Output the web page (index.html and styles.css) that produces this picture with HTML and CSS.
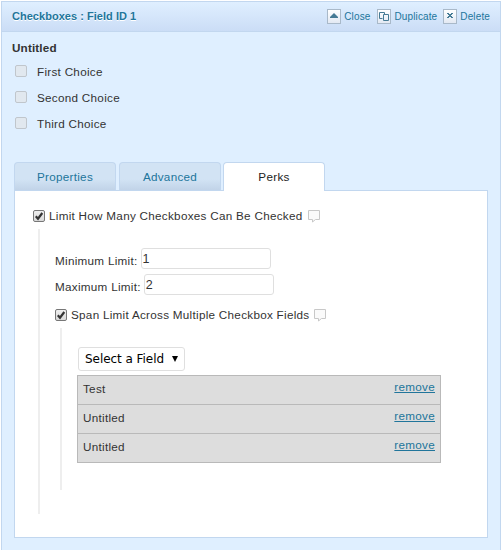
FILE: index.html
```
<!DOCTYPE html>
<html lang="en">
<head>
<meta charset="utf-8">
<title>Checkboxes field</title>
<link rel="stylesheet" href="styles.css">
</head>
<body>
<section class="field">
  <header class="head">
    <strong class="title">Checkboxes : Field ID 1</strong>
    <a class="action close"><svg class="icon" viewBox="0 0 12 13"><path d="M2 8V7L6 3L10 7V8Z"/></svg><span>Close</span></a>
    <a class="action duplicate"><svg class="icon" viewBox="0 0 12 13"><path class="line" d="M4.500 8.500H1.500V2.500H6.500V4.500M5.500 4.500H10.500V10.500H5.500Z"/></svg><span>Duplicate</span></a>
    <a class="action delete"><svg class="icon" viewBox="0 0 12 13"><path d="M3 3H5V4H7V3H9V4H8V5H7V6H8V7H9V8H7V7H5V8H3V7H4V6H5V5H4V4H3Z"/></svg><span>Delete</span></a>
  </header>
  <div class="preview">
    <strong class="label">Untitled</strong>
    <div class="choice"><i class="box off"></i><span>First Choice</span></div>
    <div class="choice"><i class="box off"></i><span>Second Choice</span></div>
    <div class="choice"><i class="box off"></i><span>Third Choice</span></div>
  </div>
  <nav class="tabs">
    <a class="tab">Properties</a>
    <a class="tab advanced">Advanced</a>
    <a class="tab active">Perks</a>
  </nav>
  <div class="panel">
    <div class="option">
      <span class="box on"><svg viewBox="0 0 12 12"><path d="M2.800 6.200L5 8.700L9.300 3"/></svg></span><span class="text">Limit How Many Checkboxes Can Be Checked</span><svg class="tip" viewBox="0 0 12 13"><path d="M.5 .5H11.500V9.500H7.500L4.500 12V9.500H.5Z"/></svg>
    </div>
    <div class="group outer">
      <div class="row"><label>Minimum Limit:</label><div class="input">1</div></div>
      <div class="row"><label>Maximum Limit:</label><div class="input">2</div></div>
      <div class="option span">
        <span class="box on"><svg viewBox="0 0 12 12"><path d="M2.800 6.200L5 8.700L9.300 3"/></svg></span><span class="text">Span Limit Across Multiple Checkbox Fields</span><svg class="tip" viewBox="0 0 12 13"><path d="M.5 .5H11.500V9.500H7.500L4.500 12V9.500H.5Z"/></svg>
      </div>
      <div class="group inner">
        <div class="select"><span>Select a Field</span><svg viewBox="0 0 6 6"><path d="M0 0H6L3 6Z"/></svg></div>
        <ul class="list">
          <li><span>Test</span><a>remove</a></li>
          <li><span>Untitled</span><a>remove</a></li>
          <li><span>Untitled</span><a>remove</a></li>
        </ul>
      </div>
    </div>
  </div>
</section>
</body>
</html>
```
FILE: styles.css
```
* { box-sizing: border-box; }
body {
  margin: 0;
  height: 550px;
  overflow: hidden;
  background: #fff;
  color: #333;
  font: 11.700px/16px "Liberation Sans", Arial, sans-serif;
  letter-spacing: .28px;
}
a { color: #21759b; }
.field {
  width: 500px;
  height: 560px;
  margin: 1px 0 0 1px;
  border: 1px solid #c2d7ef;
  background: #dfefff;
}
.head {
  display: flex;
  align-items: center;
  height: 30px;
  padding: 0 10px;
  border-bottom: 1px solid #c2d7ef;
  background: linear-gradient(#dfefff, #cbddf6);
}
.title {
  flex: 1;
  padding-bottom: 1px;
  color: #21759b;
  font-size: 11px;
  letter-spacing: .03px;
  text-shadow: 0 1px 0 #fff;
}
.action {
  display: flex;
  align-items: center;
  font-size: 10px;
  letter-spacing: .13px;
}
.action span { margin-left: 3px; }
.icon {
  width: 14px;
  height: 15px;
  margin-top: -1px;
  border: 1px solid #a9b9c9;
  background: linear-gradient(#fff, #e3e9f3);
  fill: #467b95;
}
.line { fill: none; stroke: #467b95; }
.duplicate { margin-left: 7px; }
.delete { margin-left: 6px; }
.preview { height: 130px; padding: 8px 10px 0; }
.label { display: block; height: 19px; letter-spacing: .15px; }
.choice {
  display: flex;
  align-items: center;
  height: 26px;
}
.choice span { margin-left: 10px; }
.box {
  display: block;
  flex: none;
  width: 12px;
  height: 12px;
  border: 1px solid #777;
  border-radius: 2px;
  background: linear-gradient(#eee, #d9d9d9);
}
.off { margin: -2px 0 0 3px; border-color: #c0c6cc; background: #e1e8ef; }
.on svg { display: block; width: 12px; height: 12px; margin: -1px; }
.on path { fill: none; stroke: #333; stroke-width: 2.200; }
.tabs {
  display: flex;
  gap: 2px;
  height: 29px;
  padding-left: 12px;
}
.tab {
  width: 102px;
  height: 28px;
  border: 1px solid #c2d7ef;
  border-bottom: 0;
  border-radius: 4px 4px 0 0;
  background: linear-gradient(#d2e3f4 60%, #c1d3e8);
  line-height: 28px;
  text-align: center;
}
.advanced { margin-left: 1px; }
.active {
  position: relative;
  height: 29px;
  background: #fff;
  color: #222;
}
.panel {
  width: 474px;
  height: 348px;
  margin: -1px 0 0 12px;
  padding: 17px 18px 0;
  border: 1px solid #c2d7ef;
  background: #fff;
}
.option { display: flex; align-items: center; height: 16px; }
.option .text { margin-left: 4px; }
.tip {
  width: 12px;
  height: 13px;
  margin: 1px 0 0 5px;
  fill: #fafafa;
  stroke: #c8c8c8;
}
.group { border-left: 2px solid #eee; }
.outer {
  height: 285px;
  margin: 5px 0 0 5px;
  padding: 19px 0 0 15px;
}
.row { display: flex; height: 26px; }
.row label { padding-top: 5px; }
.input {
  width: 130px;
  height: 21px;
  margin-left: 3px;
  padding-left: 1px;
  border: 1px solid #dfdfdf;
  border-radius: 3px;
  font-size: 12.500px;
  line-height: 21px;
}
.span { margin-top: 7px; }
.inner {
  height: 162px;
  margin: 5px 0 0 5px;
  padding: 19px 0 0 15px;
}
.select {
  display: flex;
  align-items: center;
  width: 107px;
  height: 24px;
  margin-left: 1px;
  padding-left: 6px;
  border: 1px solid #dfdfdf;
  border-radius: 3px;
  color: #000;
  font: 12px "DejaVu Sans", sans-serif;
  letter-spacing: -.05px;
}
.select svg { width: 6px; height: 6px; margin-left: 8px; }
.list {
  width: 364px;
  margin: 4px 0 0;
  padding: 0;
  border: 1px solid #b9b9b9;
  border-bottom: 0;
  background: #ddd;
  list-style: none;
}
.list li {
  display: flex;
  justify-content: space-between;
  height: 29px;
  padding: 3px 5px 0;
  border-bottom: 1px solid #b9b9b9;
}
.list span { padding-top: 2px; }
.list a { text-decoration: underline; }
```
